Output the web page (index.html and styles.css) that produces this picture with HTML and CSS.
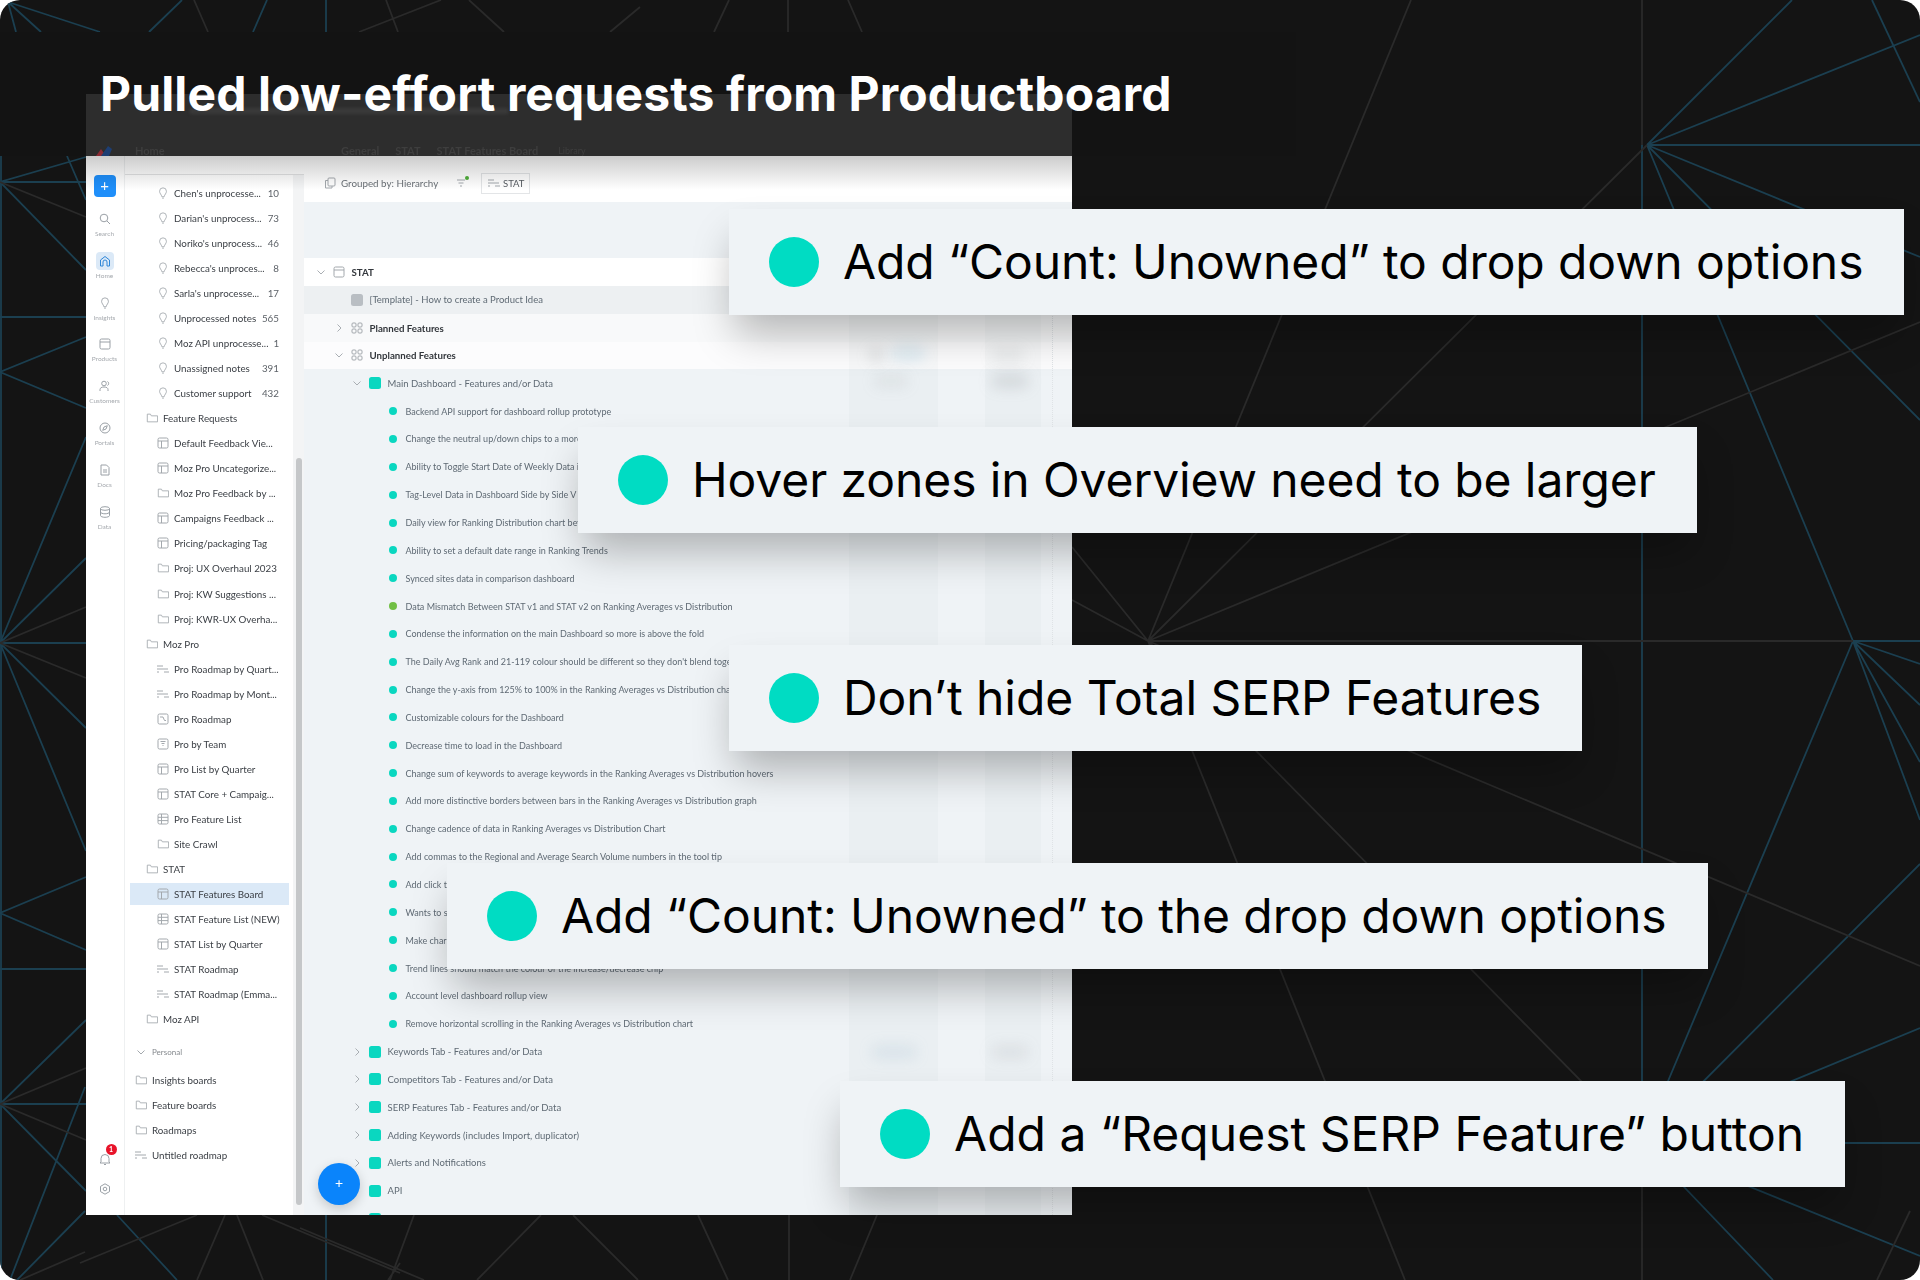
FILE: index.html
```html
<!DOCTYPE html>
<html lang="en">
<head>
<meta charset="utf-8">
<title>Pulled low-effort requests from Productboard</title>
<link rel="stylesheet" href="styles.css">
</head>
<body>
<svg class="defs" width="0" height="0" aria-hidden="true">
  <symbol id="i-bulb" viewBox="0 0 12 14"><path d="M6 1a4 4 0 0 0-4 4c0 2.6 2.1 3.6 2.7 6.4h2.6C7.900 8.600 10 7.600 10 5a4 4 0 0 0-4-4z"/><path d="M5 13h2"/></symbol>
  <symbol id="i-folder" viewBox="0 0 14 12"><path d="M1.500 10.500v-9h3.700l1 2h7.300v7z"/></symbol>
  <symbol id="i-board" viewBox="0 0 12 12"><rect x="1" y="1" width="10" height="10" rx="1.500"/><path d="M1 4h10M4.500 4v7"/></symbol>
  <symbol id="i-table" viewBox="0 0 12 12"><rect x="1" y="1" width="10" height="10" rx="1.500"/><path d="M1 4.300h10M1 7.600h10M4.500 1v10"/></symbol>
  <symbol id="i-road" viewBox="0 0 12 12"><path d="M0 3h6M0 6h11M7 9h5M0 9h2"/></symbol>
  <symbol id="i-map" viewBox="0 0 12 12"><rect x="1" y="1" width="10" height="10" rx="1.500"/><path d="M3 4h3l1.500 3.500H9"/></symbol>
  <symbol id="i-team" viewBox="0 0 12 12"><rect x="1" y="1" width="10" height="10" rx="1.500"/><path d="M3.500 3.500h5M4.500 5.500h3M5.500 7.500h1"/></symbol>
  <symbol id="i-grid" viewBox="0 0 12 12"><rect x="1" y="1" width="4" height="4" rx="1"/><rect x="7" y="1" width="4" height="4" rx="1"/><rect x="1" y="7" width="4" height="4" rx="1"/><rect x="7" y="7" width="4" height="4" rx="1"/></symbol>
  <symbol id="i-prod" viewBox="0 0 12 12"><rect x="1" y="1" width="10" height="10" rx="1.500"/><path d="M1 4h10"/></symbol>
  <symbol id="i-down" viewBox="0 0 12 12"><path d="M2.500 4.500 6 8l3.500-3.500"/></symbol>
  <symbol id="i-right" viewBox="0 0 12 12"><path d="M4.500 2.500 8 6l-3.500 3.500"/></symbol>
  <symbol id="i-search" viewBox="0 0 12 12"><circle cx="5" cy="5" r="3.800"/><path d="m8 8 3 3"/></symbol>
  <symbol id="i-home" viewBox="0 0 12 12"><path d="M1.500 11V5L6 1.500 10.500 5v6h-2.500V7a2 2 0 0 0-4 0v4z"/></symbol>
  <symbol id="i-user" viewBox="0 0 12 12"><circle cx="5" cy="3.500" r="2.300"/><path d="M1 11V9.500c0-1.500 1.500-2.500 4-2.500s4 1 4 2.500V11M8.500 1.500c1.500.5 1.500 3.500 0 4"/></symbol>
  <symbol id="i-portal" viewBox="0 0 12 12"><circle cx="6" cy="6" r="5"/><path d="M8.300 3.700 7 7 3.700 8.300 5 5z"/></symbol>
  <symbol id="i-doc" viewBox="0 0 12 12"><path d="M2 1h5.500L10 3.500V11H2zM4 6h4M4 8h4"/></symbol>
  <symbol id="i-data" viewBox="0 0 12 12"><ellipse cx="6" cy="2.500" rx="4.500" ry="1.800"/><path d="M1.500 2.500v7c0 1 2 1.800 4.500 1.800s4.500-.8 4.500-1.800v-7M1.500 6c0 1 2 1.800 4.500 1.800s4.500-.8 4.500-1.800"/></symbol>
  <symbol id="i-bell" viewBox="0 0 12 12"><path d="M2 9V5.500a4 4 0 0 1 8 0V9l1 1H1zM5 11.500h2"/></symbol>
  <symbol id="i-gear" viewBox="0 0 12 12"><path d="M6 .8 10.500 3.400v5.200L6 11.200 1.500 8.600V3.400z"/><circle cx="6" cy="6" r="1.800"/></symbol>
  <symbol id="i-copy" viewBox="0 0 12 12"><rect x="4" y="1" width="7" height="8" rx="1"/><path d="M4 3.500H1.500V11H8V9"/></symbol>
  <symbol id="i-filter" viewBox="0 0 12 12"><path d="M1 3h8M2.500 6h5M4 9h2"/></symbol>
</svg>

<div class="slide">
  <svg class="net" viewBox="0 0 1920 1280" aria-hidden="true">
    <g class="blue">
      <path d="M1647 145 1792 0M1647 145 1920 35M1647 145H1920M1647 145 1920 420M1647 145 1853 641M1647 145 1920 257"/>
      <path d="M1642 145V1143"/>
      <path d="M1853 641H1920M1853 641 1920 664M1853 641 1920 705M1853 641 1920 762M1853 641 1920 820M1853 641 1642 1143"/>
      <path d="M1642 1143 1920 864M1642 1143 1920 1028M1642 1143H1920M1642 1143 1773 1280M1642 1143 1920 1256"/>
      <path d="M1872 0 1920 102"/>
      <path d="M8 2 41 32M8 2 16 32M8 2 100 32M182 0 149 32M267 0 253 32M326 0V32"/>
      <path d="M1 156V1280"/>
      <path d="M0 182H86M0 182 86 157M0 182 86 270M67 156 86 200M0 317H86M0 372 86 337M0 372 86 408"/>
      <path d="M0 643 86 437M0 643 86 558M0 643 86 728M0 643 86 851M0 643H86"/>
      <path d="M0 913 86 877M0 913 86 950M0 969H86M0 1104H86M0 1104 86 1020M0 1104 86 1191M85 1087 10 1280M85 1211 17 1280"/>
      <path d="M326 1215V1280M117 1215 177 1280"/>
    </g>
    <g class="grey">
      <path d="M1642 0V145M1642 1143V1280M1647 145 1148 641M1411 0 1148 641M1920 322 1148 641M1148 641H1853"/>
      <path d="M1148 641 1920 966M1148 641 1405 1280M1148 641 1642 1143M1072 547 1148 641M1072 600 1148 641"/>
      <path d="M1910 1211 1877 1280"/>
      <path d="M194 0 208 32M386 0 398 32M441 0 359 32M469 0 504 32M640 7 610 32M729 0 714 32M788 0V32M848 0 862 32"/>
      <path d="M0 182 86 217M0 643 86 607M0 643 86 678M0 1104 86 1068M0 1104 86 1140M85 1252 20 1280"/>
      <path d="M197 1215 80 1263M225 1215 197 1280M237 1215 263 1280M262 1215 400 1273M400 1263 388 1280M300 1228 424 1280M414 1215 390 1280M541 1215 477 1280M573 1215 638 1280M698 1215 728 1280M789 1215V1280M877 1215 850 1280"/>
    </g>
  </svg>
  <div class="mask"></div>

  <header class="head">
    <h1 class="title">Pulled low-effort requests from Productboard</h1>
  </header>

  <section class="card">
    <div class="chrome">
      <div class="urlrow"><span class="urlbar"></span></div>
      <div class="crumbs">
        <svg class="logo" viewBox="0 0 16 10"><path class="logo-red" d="M0 10 5 3l5 7z"/><path class="logo-blue" d="M5 10 12 0l4 3-3 7z"/></svg>
        <span class="crumb-home">Home</span>
        <span class="crumb">General</span><span class="crumb">STAT</span><span class="crumb">STAT Features Board</span><span class="crumb-tag">Library</span>
      </div>
    </div>

    <div class="app">
      <nav class="rail">
        <div class="plus">+</div>
        <div class="nav"><svg class="ic"><use href="#i-search"/></svg><span>Search</span></div>
        <div class="nav nav-on"><span class="tile"><svg class="ic ic-on"><use href="#i-home"/></svg></span><span>Home</span></div>
        <div class="nav"><svg class="ic"><use href="#i-bulb"/></svg><span>Insights</span></div>
        <div class="nav"><svg class="ic"><use href="#i-prod"/></svg><span>Products</span></div>
        <div class="nav"><svg class="ic"><use href="#i-user"/></svg><span>Customers</span></div>
        <div class="nav"><svg class="ic"><use href="#i-portal"/></svg><span>Portals</span></div>
        <div class="nav"><svg class="ic"><use href="#i-doc"/></svg><span>Docs</span></div>
        <div class="nav"><svg class="ic"><use href="#i-data"/></svg><span>Data</span></div>
        <div class="rail-foot">
          <div class="bell"><svg class="ic"><use href="#i-bell"/></svg><b class="badge">1</b></div>
          <svg class="ic"><use href="#i-gear"/></svg>
        </div>
      </nav>

      <aside class="panel">
        <div class="panel-head"></div>
        <div class="panel-list">
          <div class="pr l2"><svg class="pi"><use href="#i-bulb"/></svg><span>Chen's unprocesse...</span><em>10</em></div>
          <div class="pr l2"><svg class="pi"><use href="#i-bulb"/></svg><span>Darian's unprocess...</span><em>73</em></div>
          <div class="pr l2"><svg class="pi"><use href="#i-bulb"/></svg><span>Noriko's unprocess...</span><em>46</em></div>
          <div class="pr l2"><svg class="pi"><use href="#i-bulb"/></svg><span>Rebecca's unproces...</span><em>8</em></div>
          <div class="pr l2"><svg class="pi"><use href="#i-bulb"/></svg><span>Sarla's unprocesse...</span><em>17</em></div>
          <div class="pr l2"><svg class="pi"><use href="#i-bulb"/></svg><span>Unprocessed notes</span><em>565</em></div>
          <div class="pr l2"><svg class="pi"><use href="#i-bulb"/></svg><span>Moz API unprocesse...</span><em>1</em></div>
          <div class="pr l2"><svg class="pi"><use href="#i-bulb"/></svg><span>Unassigned notes</span><em>391</em></div>
          <div class="pr l2"><svg class="pi"><use href="#i-bulb"/></svg><span>Customer support</span><em>432</em></div>
          <div class="pr l1"><svg class="pi"><use href="#i-folder"/></svg><span>Feature Requests</span></div>
          <div class="pr l2"><svg class="pi"><use href="#i-board"/></svg><span>Default Feedback Vie...</span></div>
          <div class="pr l2"><svg class="pi"><use href="#i-board"/></svg><span>Moz Pro Uncategorize...</span></div>
          <div class="pr l2"><svg class="pi"><use href="#i-folder"/></svg><span>Moz Pro Feedback by ...</span></div>
          <div class="pr l2"><svg class="pi"><use href="#i-board"/></svg><span>Campaigns Feedback ...</span></div>
          <div class="pr l2"><svg class="pi"><use href="#i-board"/></svg><span>Pricing/packaging Tag</span></div>
          <div class="pr l2"><svg class="pi"><use href="#i-folder"/></svg><span>Proj: UX Overhaul 2023</span></div>
          <div class="pr l2"><svg class="pi"><use href="#i-folder"/></svg><span>Proj: KW Suggestions ...</span></div>
          <div class="pr l2"><svg class="pi"><use href="#i-folder"/></svg><span>Proj: KWR-UX Overha...</span></div>
          <div class="pr l1"><svg class="pi"><use href="#i-folder"/></svg><span>Moz Pro</span></div>
          <div class="pr l2"><svg class="pi"><use href="#i-road"/></svg><span>Pro Roadmap by Quart...</span></div>
          <div class="pr l2"><svg class="pi"><use href="#i-road"/></svg><span>Pro Roadmap by Mont...</span></div>
          <div class="pr l2"><svg class="pi"><use href="#i-map"/></svg><span>Pro Roadmap</span></div>
          <div class="pr l2"><svg class="pi"><use href="#i-team"/></svg><span>Pro by Team</span></div>
          <div class="pr l2"><svg class="pi"><use href="#i-board"/></svg><span>Pro List by Quarter</span></div>
          <div class="pr l2"><svg class="pi"><use href="#i-board"/></svg><span>STAT Core + Campaig...</span></div>
          <div class="pr l2"><svg class="pi"><use href="#i-table"/></svg><span>Pro Feature List</span></div>
          <div class="pr l2"><svg class="pi"><use href="#i-folder"/></svg><span>Site Crawl</span></div>
          <div class="pr l1"><svg class="pi"><use href="#i-folder"/></svg><span>STAT</span></div>
          <div class="pr l2 active"><svg class="pi"><use href="#i-board"/></svg><span>STAT Features Board</span></div>
          <div class="pr l2"><svg class="pi"><use href="#i-table"/></svg><span>STAT Feature List (NEW)</span></div>
          <div class="pr l2"><svg class="pi"><use href="#i-board"/></svg><span>STAT List by Quarter</span></div>
          <div class="pr l2"><svg class="pi"><use href="#i-road"/></svg><span>STAT Roadmap</span></div>
          <div class="pr l2"><svg class="pi"><use href="#i-road"/></svg><span>STAT Roadmap (Emma...</span></div>
          <div class="pr l1"><svg class="pi"><use href="#i-folder"/></svg><span>Moz API</span></div>
          <div class="pr l0 personal"><svg class="pi"><use href="#i-down"/></svg><span>Personal</span></div>
          <div class="pr l0"><svg class="pi"><use href="#i-folder"/></svg><span>Insights boards</span></div>
          <div class="pr l0"><svg class="pi"><use href="#i-folder"/></svg><span>Feature boards</span></div>
          <div class="pr l0"><svg class="pi"><use href="#i-folder"/></svg><span>Roadmaps</span></div>
          <div class="pr l0"><svg class="pi"><use href="#i-road"/></svg><span>Untitled roadmap</span></div>
        </div>
        <div class="thumb"></div>
      </aside>

      <main class="main">
        <div class="toolbar">
          <svg class="pi"><use href="#i-copy"/></svg>
          <span class="group">Grouped by: Hierarchy</span>
          <span class="filter"><svg class="pi"><use href="#i-filter"/></svg><i class="fdot"></i></span>
          <span class="chip"><svg class="pi"><use href="#i-road"/></svg>STAT</span>
        </div>
        <div class="tree">
          <div class="row r0 white"><svg class="chev"><use href="#i-down"/></svg><svg class="pi"><use href="#i-prod"/></svg><strong>STAT</strong></div>
          <div class="row r1 tint"><i class="chev"></i><i class="sq gray"></i><span>[Template] - How to create a Product Idea</span></div>
          <div class="row r1 soft"><svg class="chev"><use href="#i-right"/></svg><svg class="pi"><use href="#i-grid"/></svg><strong>Planned Features</strong></div>
          <div class="row r1 softer"><svg class="chev"><use href="#i-down"/></svg><svg class="pi"><use href="#i-grid"/></svg><strong>Unplanned Features</strong></div>
          <div class="row r2"><svg class="chev"><use href="#i-down"/></svg><i class="sq"></i><span>Main Dashboard - Features and/or Data</span></div>
          <div class="row r3"><i class="dot"></i><span>Backend API support for dashboard rollup prototype</span></div>
          <div class="row r3"><i class="dot"></i><span>Change the neutral up/down chips to a more</span></div>
          <div class="row r3"><i class="dot"></i><span>Ability to Toggle Start Date of Weekly Data in</span></div>
          <div class="row r3"><i class="dot"></i><span>Tag-Level Data in Dashboard Side by Side V</span></div>
          <div class="row r3"><i class="dot"></i><span>Daily view for Ranking Distribution chart bey</span></div>
          <div class="row r3"><i class="dot"></i><span>Ability to set a default date range in Ranking Trends</span></div>
          <div class="row r3"><i class="dot"></i><span>Synced sites data in comparison dashboard</span></div>
          <div class="row r3"><i class="dot green"></i><span>Data Mismatch Between STAT v1 and STAT v2 on Ranking Averages vs Distribution</span></div>
          <div class="row r3"><i class="dot"></i><span>Condense the information on the main Dashboard so more is above the fold</span></div>
          <div class="row r3"><i class="dot"></i><span>The Daily Avg Rank and 21-119 colour should be different so they don't blend together</span></div>
          <div class="row r3"><i class="dot"></i><span>Change the y-axis from 125% to 100% in the Ranking Averages vs Distribution chart</span></div>
          <div class="row r3"><i class="dot"></i><span>Customizable colours for the Dashboard</span></div>
          <div class="row r3"><i class="dot"></i><span>Decrease time to load in the Dashboard</span></div>
          <div class="row r3"><i class="dot"></i><span>Change sum of keywords to average keywords in the Ranking Averages vs Distribution hovers</span></div>
          <div class="row r3"><i class="dot"></i><span>Add more distinctive borders between bars in the Ranking Averages vs Distribution graph</span></div>
          <div class="row r3"><i class="dot"></i><span>Change cadence of data in Ranking Averages vs Distribution Chart</span></div>
          <div class="row r3"><i class="dot"></i><span>Add commas to the Regional and Average Search Volume numbers in the tool tip</span></div>
          <div class="row r3"><i class="dot"></i><span>Add click t</span></div>
          <div class="row r3"><i class="dot"></i><span>Wants to s</span></div>
          <div class="row r3"><i class="dot"></i><span>Make char</span></div>
          <div class="row r3"><i class="dot"></i><span>Trend lines should match the colour of the increase/decrease chip</span></div>
          <div class="row r3"><i class="dot"></i><span>Account level dashboard rollup view</span></div>
          <div class="row r3"><i class="dot"></i><span>Remove horizontal scrolling in the Ranking Averages vs Distribution chart</span></div>
          <div class="row r2"><svg class="chev"><use href="#i-right"/></svg><i class="sq"></i><span>Keywords Tab - Features and/or Data</span></div>
          <div class="row r2"><svg class="chev"><use href="#i-right"/></svg><i class="sq"></i><span>Competitors Tab - Features and/or Data</span></div>
          <div class="row r2"><svg class="chev"><use href="#i-right"/></svg><i class="sq"></i><span>SERP Features Tab - Features and/or Data</span></div>
          <div class="row r2"><svg class="chev"><use href="#i-right"/></svg><i class="sq"></i><span>Adding Keywords (includes Import, duplicator)</span></div>
          <div class="row r2"><svg class="chev"><use href="#i-right"/></svg><i class="sq"></i><span>Alerts and Notifications</span></div>
          <div class="row r2"><i class="chev"></i><i class="sq"></i><span>API</span></div>
          <div class="row r2"><i class="chev"></i><i class="sq"></i></div>
        </div>
        <div class="col col-a"><i class="sm sm1"></i><i class="sm sm2"></i><i class="sm sm3"></i><i class="sm sm4"></i></div>
        <div class="col col-b"><i class="sm sm5"></i><i class="sm sm6"></i><i class="sm sm7"></i></div>
        <div class="col-line"></div>
        <div class="fab">+</div>
      </main>
      <div class="top-shade"></div>
    </div>
  </section>

  <div class="callouts">
    <div class="callout c1"><i class="bubble"></i><span>Add “Count: Unowned” to drop down options</span></div>
    <div class="callout c2"><i class="bubble"></i><span>Hover zones in Overview need to be larger</span></div>
    <div class="callout c3"><i class="bubble"></i><span>Don’t hide Total SERP Features</span></div>
    <div class="callout c4"><i class="bubble"></i><span>Add “Count: Unowned” to the drop down options</span></div>
    <div class="callout c5"><i class="bubble"></i><span>Add a “Request SERP Feature” button</span></div>
  </div>
</div>
</body>
</html>
```
FILE: styles.css
```css
* { box-sizing: border-box; }
html, body { margin: 0; height: 1280px; overflow: hidden; background: #fff; }
.defs { position: absolute; }

.slide {
  position: relative;
  width: 1920px;
  height: 1280px;
  overflow: hidden;
  border-radius: 20px;
  background: #141414;
  font-family: "Lato", "Liberation Sans", sans-serif;
}
.net { position: absolute; inset: 0; width: 1920px; height: 1280px; fill: none; }
.net path { stroke-width: 1.8; }
.blue { stroke: #1b3f50; }
.grey { stroke: #2a2a2a; }
.mask { position: absolute; left: 0; top: 32px; width: 1296px; height: 124px; background: #131313; }

.head { position: relative; z-index: 3; height: 94px; padding: 64px 0 0 100px; }
.title {
  margin: 0;
  font: 700 48px/60px "Inter", "Liberation Sans", sans-serif;
  letter-spacing: .11px;
  color: #fff;
  white-space: nowrap;
}

/* Screenshot card */
.card { position: relative; width: 986px; height: 1121px; margin-left: 86px; overflow: hidden; }
.chrome { height: 62px; background: #2d2d2d; color: #3e3e3e; filter: blur(.7px); overflow: hidden; }
.urlrow { height: 34px; padding-left: 104px; display: flex; align-items: center; }
.urlbar { width: 318px; height: 6px; background: #3a3a3a; filter: blur(1.500px); }
.crumbs { height: 28px; display: flex; align-items: flex-start; font-size: 11px; line-height: 46px; font-weight: 700; }
.logo { width: 16px; height: 10px; margin: 18px 0 0 10px; }
.logo-red { fill: #8c2a33; }
.logo-blue { fill: #1d3e73; }
.crumb-home { margin-left: 23px; width: 206px; }
.crumb { margin-right: 16px; }
.crumb-tag { margin-left: 4px; font-size: 9px; font-weight: 400; }

.app {
  position: relative;
  height: 1059px;
  display: grid;
  grid-template-columns: 39px 179px 1fr;
  grid-template-rows: 1059px;
  background: #fff;
  filter: blur(.3px);
  overflow: hidden;
}
.top-shade {
  position: absolute;
  left: 0; right: 0; top: 0;
  height: 34px;
  background: linear-gradient(rgba(0,0,0,.2), rgba(0,0,0,0));
  pointer-events: none;
}

/* Rail */
.rail { display: flex; flex-direction: column; align-items: center; padding: 19px 1px 19px 0; background: #fff; border-right: 1px solid #eef0f1; color: #a5a9ae; overflow: hidden; }
.plus { flex: none; width: 22px; height: 22px; border-radius: 4px; background: #1f8ffa; color: #fff; font-size: 15px; line-height: 21px; text-align: center; margin-bottom: 15px; }
.nav { flex: none; width: 37px; height: 41.800px; display: flex; flex-direction: column; align-items: center; justify-content: flex-start; gap: 3px; font-size: 6.500px; line-height: 9px; }
.ic { width: 12px; height: 12px; margin: 1px 0; fill: none; stroke: #9aa0a6; stroke-width: 1; flex: none; }
.ic-on { stroke: #2e86d8; }
.nav-on { margin-top: -2px; margin-bottom: 2px; gap: 1px; }
.tile { width: 18px; height: 18px; border-radius: 4px; background: #dbe9f7; display: flex; align-items: center; justify-content: center; }
.rail-foot { margin-top: auto; display: flex; flex-direction: column; align-items: center; gap: 18px; }
.bell { position: relative; height: 14px; }
.badge { position: absolute; left: 7px; top: -6px; width: 11px; height: 11px; border-radius: 50%; background: #e8132a; color: #fff; font: 700 7px/11px "Lato", sans-serif; text-align: center; }

/* Panel */
.panel { position: relative; background: #f3f4f5; overflow: hidden; }
.panel-head { height: 19px; background: #fff; border-bottom: 1px solid #e2e3e4; width: 179px; }
.panel-list { width: 168px; height: 1040px; padding-top: 5.500px; background: #fff; }
.pr { height: 25.040px; display: flex; align-items: center; gap: 5px; padding-right: 14px; font-size: 9.800px; color: #3c4046; white-space: nowrap; }
.pr em { margin-left: auto; font-style: normal; color: #5d6268; }
.pi { flex: none; width: 12px; height: 12px; fill: none; stroke: #a3a8ad; stroke-width: 1; }
.l2 { padding-left: 32px; }
.l1 { padding-left: 21px; }
.l0 { padding-left: 10px; }
.personal { margin-top: 8px; margin-bottom: 3px; font-size: 8px; color: #85898e; }
.active { background: linear-gradient(#dbe9f7, #dbe9f7) no-repeat 5px center / 159px 22px; }
.thumb { position: absolute; left: 171px; top: 302px; width: 6px; height: 747px; border-radius: 3px; background: #c5c7c9; }

/* Main */
.main { position: relative; background: #eff3f6; min-width: 0; overflow: hidden; }
.toolbar { height: 46px; background: #fff; display: flex; align-items: center; padding: 8px 0 0 20px; font-size: 9.800px; color: #6a7076; gap: 5px; }
.group { width: 99px; white-space: nowrap; }
.filter { position: relative; margin-left: 11px; display: flex; }
.fdot { position: absolute; right: -1px; top: -1px; width: 4px; height: 4px; border-radius: 50%; background: #4fae3a; }
.chip { margin-left: 8px; width: 49px; height: 21px; border: 1px solid #e3e5e7; display: flex; align-items: center; gap: 3px; padding-left: 6px; font-size: 9.500px; color: #575c62; }
.tree { margin-top: 56px; }
.row { height: 27.850px; display: flex; align-items: center; font-size: 9.500px; color: #5f6a74; white-space: nowrap; }
.row .chev { flex: none; width: 12px; height: 12px; margin-right: 6px; fill: none; stroke: #a9aeb3; stroke-width: 1; }
.row .pi { margin-right: 6.500px; }
.row strong { font-weight: 700; font-size: 9.700px; color: #33373c; }
.r0 { padding-left: 11px; }
.r1 { padding-left: 11px; margin-left: 0; }
.r1 > :first-child { margin-left: 18px; }
.r2 { padding-left: 47px; }
.r3 { padding-left: 85px; font-size: 9px; }
.white { background: #fff; }
.tint { background: #edf0f2; }
.soft { background: #f8f9fa; }
.softer { background: #fcfcfd; }
.sq { flex: none; width: 12px; height: 12px; border-radius: 2.500px; background: #0ad7c0; margin-right: 6.500px; }
.sq.gray { background: #b9bec3; }
.dot { flex: none; width: 8px; height: 8px; border-radius: 50%; background: #0ad7c0; margin-right: 8.500px; }
.dot.green { background: #71bf45; }

.col { position: absolute; top: 102px; bottom: 0; background: rgba(120,130,135,.035); }
.col-a { left: 545px; width: 89px; }
.col-b { left: 681px; width: 56px; }
.col-line { position: absolute; top: 102px; bottom: 0; left: 748px; border-left: 1px dotted #dfe3e6; }
.sm { position: absolute; height: 14px; border-radius: 7px; background: rgba(120,125,130,.2); filter: blur(7px); }
.sm1 { left: 20px; top: 90px; width: 14px; }
.sm2 { left: 42px; top: 88px; width: 34px; background: rgba(120,190,225,.2); }
.sm3 { left: 24px; top: 116px; width: 36px; background: rgba(120,125,130,.1); }
.sm4 { left: 22px; top: 787px; width: 46px; background: rgba(120,160,190,.15); }
.sm5 { left: 6px; top: 116px; width: 38px; }
.sm6 { left: 6px; top: 787px; width: 38px; background: rgba(120,125,130,.12); }
.sm7 { left: 6px; top: 90px; width: 34px; background: rgba(120,125,130,.1); }
.fab { position: absolute; left: 14px; bottom: 10px; width: 42px; height: 42px; border-radius: 50%; background: #0a84fb; color: #fff; font-size: 14px; line-height: 40px; text-align: center; box-shadow: 0 4px 12px rgba(0,0,0,.18); }

/* Callouts overlaid on everything */
.callouts { position: absolute; z-index: 4; left: 0; top: 209px; display: flex; flex-direction: column; align-items: flex-start; gap: 112px; }
.callout {
  height: 106px;
  display: flex;
  align-items: center;
  gap: 24px;
  padding: 0 41px 0 40px;
  background: #eff3f6;
  box-shadow: 0 24px 42px -6px rgba(0,0,0,.28);
  font: 400 48px/58px "Inter", "Liberation Sans", sans-serif;
  letter-spacing: -.09px;
  color: #000;
  white-space: nowrap;
}
.bubble { flex: none; width: 50px; height: 50px; border-radius: 50%; background: #00dcc3; }
.c1 { margin-left: 729px; }
.c2 { margin-left: 578px; }
.c3 { margin-left: 729px; letter-spacing: -.04px; }
.c4 { margin-left: 447px; }
.c5 { margin-left: 840px; letter-spacing: .02px; }
```
